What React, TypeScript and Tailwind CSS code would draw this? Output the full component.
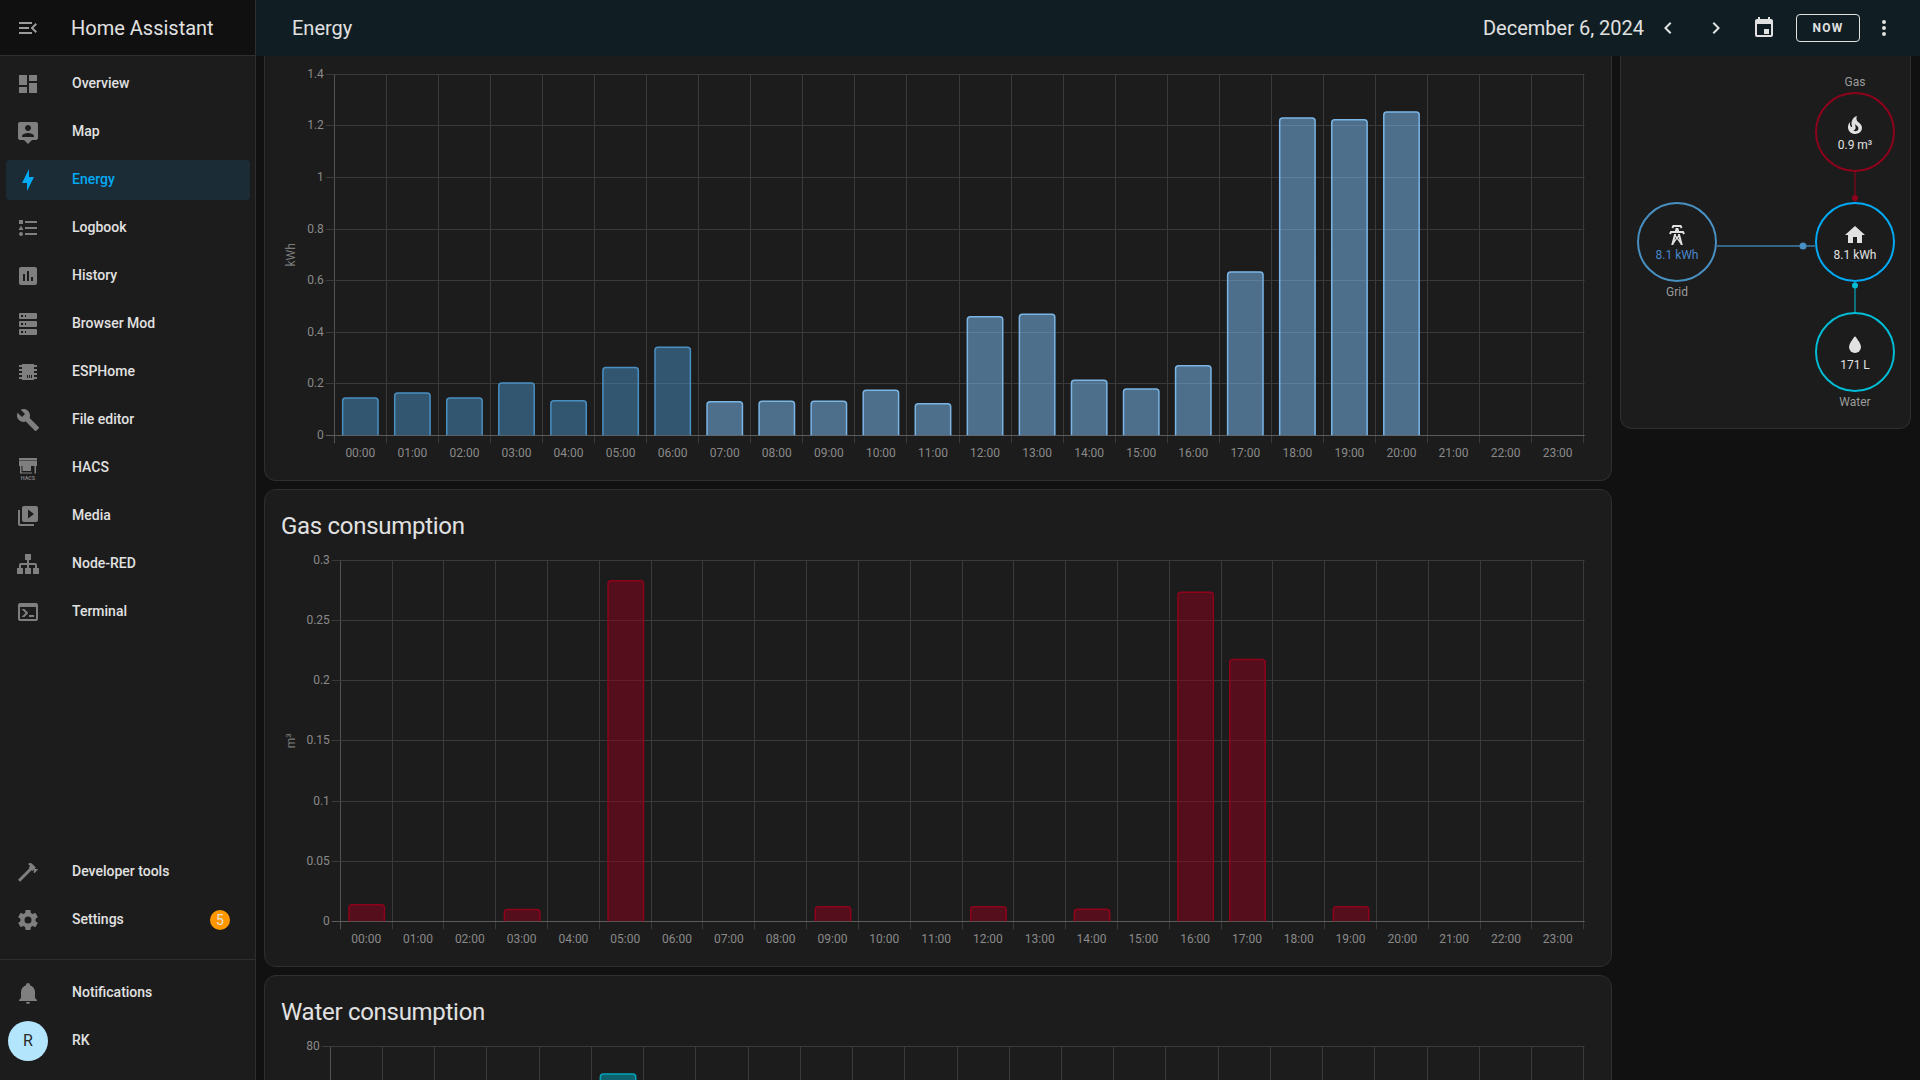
import React from "react";

const paths: Record<string, string> = {
  menu: "M21,15.61L19.59,17L14.58,12L19.59,7L21,8.39L17.44,12L21,15.61M3,6H16V8H3V6M3,13V11H13V13H3M3,18V16H16V18H3Z",
  dashboard: "M13,3V9H21V3M13,21H21V11H13M3,21H11V15H3M3,13H11V3H3V13Z",
  map: "M20 2H4C2.9 2 2 2.9 2 4V18C2 19.11 2.9 20 4 20H8L12 24L16 20H20C21.11 20 22 19.11 22 18V4C22 2.9 21.11 2 20 2M12 5C13.66 5 15 6.34 15 8C15 9.66 13.66 11 12 11C10.34 11 9 9.66 9 8C9 6.34 10.34 5 12 5M18 17H6V16C6 14 10 12.9 12 12.9C14 12.9 18 14 18 16V17Z",
  bolt: "M11 15H6L13 1V9H18L11 23V15Z",
  list: "M5,9.5L7.5,14H2.5L5,9.5M3,4H7V8H3V4M5,20A2,2 0 0,0 7,18A2,2 0 0,0 5,16A2,2 0 0,0 3,18A2,2 0 0,0 5,20M9,5V7H21V5H9M9,19H21V17H9V19M9,13H21V11H9V13Z",
  chart: "M19 3H5C3.9 3 3 3.9 3 5V19C3 20.1 3.9 21 5 21H19C20.1 21 21 20.1 21 19V5C21 3.9 20.1 3 19 3M9 17H7V10H9V17M13 17H11V7H13V17M17 17H15V13H17V17Z",
  server: "M4,1H20A1,1 0 0,1 21,2V6A1,1 0 0,1 20,7H4A1,1 0 0,1 3,6V2A1,1 0 0,1 4,1M4,9H20A1,1 0 0,1 21,10V14A1,1 0 0,1 20,15H4A1,1 0 0,1 3,14V10A1,1 0 0,1 4,9M4,17H20A1,1 0 0,1 21,18V22A1,1 0 0,1 20,23H4A1,1 0 0,1 3,22V18A1,1 0 0,1 4,17M9,5H10V3H9V5M9,13H10V11H9V13M9,21H10V19H9V21M5,3V5H7V3H5M5,11V13H7V11H5M5,19V21H7V19H5Z",
  chip: "M6,4H18V5H21V7H18V9H21V11H18V13H21V15H18V17H21V19H18V20H6V19H3V17H6V15H3V13H6V11H3V9H6V7H3V5H6V4M11,15V18H12V15H11M13,15V18H14V15H13M15,15V18H16V15H15Z",
  wrench: "M22.7,19L13.6,9.9C14.5,7.6 14,4.9 12.1,3C10.1,1 7.1,0.6 4.7,1.7L9,6L6,9L1.6,4.7C0.4,7.1 0.9,10.1 2.9,12.1C4.8,14 7.5,14.5 9.8,13.6L18.9,22.7C19.3,23.1 19.9,23.1 20.3,22.7L22.6,20.4C23.1,20 23.1,19.3 22.7,19Z",
  media: "M4 6H2V20C2 21.1 2.9 22 4 22H18V20H4V6M20 2H8C6.9 2 6 2.9 6 4V16C6 17.1 6.9 18 8 18H20C21.1 18 22 17.1 22 16V4C22 2.9 21.1 2 20 2M12 14.5V5.5L18 10L12 14.5Z",
  sitemap: "M9,2V8H11V11H5C3.89,11 3,11.89 3,13V16H1V22H7V16H5V13H11V16H9V22H15V16H13V13H19V16H17V22H23V16H21V13C21,11.89 20.11,11 19,11H13V8H15V2H9Z",
  console: "M20,19V7H4V19H20M20,3A2,2 0 0,1 22,5V19A2,2 0 0,1 20,21H4A2,2 0 0,1 2,19V5C2,3.89 2.9,3 4,3H20M13,17V15H18V17H13M9.58,13L5.57,9H8.4L11.7,12.3C12.09,12.69 12.09,13.33 11.7,13.72L8.42,17H5.59L9.58,13Z",
  hammer: "M2 19.63L13.43 8.2L12.72 7.5L14.14 6.07L12 3.89C13.2 2.7 15.09 2.7 16.27 3.89L19.87 7.5L18.45 8.91H21.29L22 9.62L18.45 13.21L17.74 12.5V9.62L16.27 11.04L15.56 10.33L4.13 21.76L2 19.63Z",
  cog: "M12,15.5A3.5,3.5 0 0,1 8.5,12A3.5,3.5 0 0,1 12,8.5A3.5,3.5 0 0,1 15.5,12A3.5,3.5 0 0,1 12,15.5M19.43,12.97C19.47,12.65 19.5,12.33 19.5,12C19.5,11.67 19.47,11.34 19.43,11L21.54,9.37C21.73,9.22 21.78,8.95 21.66,8.73L19.66,5.27C19.54,5.05 19.27,4.96 19.05,5.05L16.56,6.05C16.04,5.66 15.5,5.32 14.87,5.07L14.5,2.42C14.46,2.18 14.25,2 14,2H10C9.75,2 9.54,2.18 9.5,2.42L9.13,5.07C8.5,5.32 7.96,5.66 7.44,6.05L4.95,5.05C4.73,4.96 4.46,5.05 4.34,5.27L2.34,8.73C2.21,8.95 2.27,9.22 2.46,9.37L4.57,11C4.53,11.34 4.5,11.67 4.5,12C4.5,12.33 4.53,12.65 4.57,12.97L2.46,14.63C2.27,14.78 2.21,15.05 2.34,15.27L4.34,18.73C4.46,18.95 4.73,19.03 4.95,18.95L7.44,17.94C7.96,18.34 8.5,18.68 9.13,18.93L9.5,21.58C9.54,21.82 9.75,22 10,22H14C14.25,22 14.46,21.82 14.5,21.58L14.87,18.93C15.5,18.67 16.04,18.34 16.56,17.94L19.05,18.95C19.27,19.03 19.54,18.95 19.66,18.73L21.66,15.27C21.78,15.05 21.73,14.78 21.54,14.63L19.43,12.97Z",
  bell: "M21,19V20H3V19L5,17V11C5,7.9 7.03,5.17 10,4.29C10,4.19 10,4.1 10,4A2,2 0 0,1 12,2A2,2 0 0,1 14,4C14,4.1 14,4.19 14,4.29C16.97,5.17 19,7.9 19,11V17L21,19M14,21A2,2 0 0,1 12,23A2,2 0 0,1 10,21",
  left: "M15.41,16.58L10.83,12L15.41,7.41L14,6L8,12L14,18L15.41,16.58Z",
  right: "M8.59,16.58L13.17,12L8.59,7.41L10,6L16,12L10,18L8.59,16.58Z",
  calendar: "M19 3H18V1H16V3H8V1H6V3H5C3.89 3 3 3.9 3 5V19A2 2 0 0 0 5 21H19A2 2 0 0 0 21 19V5A2 2 0 0 0 19 3M19 19H5V8H19V19M12 13H17V18H12V13Z",
  dots: "M12,16A2,2 0 0,1 14,18A2,2 0 0,1 12,20A2,2 0 0,1 10,18A2,2 0 0,1 12,16M12,10A2,2 0 0,1 14,12A2,2 0 0,1 12,14A2,2 0 0,1 10,12A2,2 0 0,1 12,10M12,4A2,2 0 0,1 14,6A2,2 0 0,1 12,8A2,2 0 0,1 10,6A2,2 0 0,1 12,4Z",
  home: "M10,20V14H14V20H19V12H22L12,3L2,12H5V20H10Z",
  water: "M12,20A6,6 0 0,1 6,14C6,10 12,3.25 12,3.25C12,3.25 18,10 18,14A6,6 0 0,1 12,20Z",
  fire: "M17.66 11.2C17.43 10.9 17.15 10.64 16.89 10.38C16.22 9.78 15.46 9.35 14.82 8.72C13.33 7.26 13 4.85 13.95 3C13 3.23 12.17 3.75 11.46 4.32C8.87 6.4 7.85 10.07 9.07 13.22C9.11 13.32 9.15 13.42 9.15 13.55C9.15 13.77 9 13.97 8.8 14.05C8.57 14.15 8.33 14.09 8.14 13.93C8.08 13.88 8.04 13.83 8 13.76C6.87 12.33 6.69 10.28 7.45 8.64C5.78 10 4.87 12.3 5 14.47C5.06 14.97 5.12 15.47 5.29 15.97C5.43 16.57 5.7 17.17 6 17.7C7.08 19.43 8.95 20.67 10.96 20.92C13.1 21.19 15.39 20.8 17.03 19.32C18.86 17.66 19.5 15 18.56 12.72L18.43 12.46C18.22 12 17.66 11.2 17.66 11.2M14.5 17.5C14.22 17.74 13.76 18 13.4 18.1C12.28 18.5 11.16 17.94 10.5 17.28C11.69 17 12.4 16.12 12.61 15.23C12.78 14.43 12.46 13.77 12.33 13C12.21 12.26 12.23 11.63 12.5 10.94C12.69 11.32 12.89 11.7 13.13 12C13.9 13 15.11 13.44 15.37 14.8C15.41 14.94 15.43 15.08 15.43 15.23C15.46 16.05 15.1 16.95 14.5 17.5H14.5Z",
  tower: "M8.28,5.45L6.5,4.55L7.76,2H16.23L17.5,4.55L15.72,5.44L15,4H9L8.28,5.45M18.62,8H14.09L13.3,5H10.7L9.91,8H5.38L4.1,10.55L5.89,11.44L6.62,10H17.38L18.1,11.45L19.89,10.56L18.62,8M17.77,22H15.7L15.46,21.1L12,15.9L8.53,21.1L8.3,22H6.23L9.12,11H11.19L10.83,12.35L12,14.1L13.16,12.35L12.81,11H14.88L17.77,22M11.2,15L10.47,13.9L9.56,17.36L11.2,15M14.44,17.36L13.53,13.9L12.8,15L14.44,17.36Z",
};

function Icon({ name, className = "" }: { name: string; className?: string }) {
  return (
    <svg viewBox="0 0 24 24" className={"w-6 h-6 shrink-0 fill-current " + className}>
      <path d={paths[name]} fillRule={name === "calendar" ? "evenodd" : "nonzero"} />
    </svg>
  );
}

function HacsIcon() {
  return (
    <svg viewBox="0 0 24 24" className="w-6 h-6 shrink-0 text-[#7f7f7f]">
      <path d="M3 2H21V4H3V2ZM3 4.5H21V10H3V4.5ZM4 10H5.5V17.5H4V10ZM18.5 10H20V17.5H18.5V10ZM6.5 10H15V15H6.5V10ZM4 16.5H16V17.5H4V16.5Z" fill="currentColor" />
      <text x="12" y="24" textAnchor="middle" fontSize="5.4" fontWeight="700" fill="currentColor">HACS</text>
    </svg>
  );
}

type NavItem = { label: string; icon: string; active?: boolean; badge?: string };

const topItems: NavItem[] = [
  { label: "Overview", icon: "dashboard" },
  { label: "Map", icon: "map" },
  { label: "Energy", icon: "bolt", active: true },
  { label: "Logbook", icon: "list" },
  { label: "History", icon: "chart" },
  { label: "Browser Mod", icon: "server" },
  { label: "ESPHome", icon: "chip" },
  { label: "File editor", icon: "wrench" },
  { label: "HACS", icon: "hacs" },
  { label: "Media", icon: "media" },
  { label: "Node-RED", icon: "sitemap" },
  { label: "Terminal", icon: "console" },
];

function NavRow({ item }: { item: NavItem }) {
  return (
    <div className="h-12 flex items-center">
      <div
        className={
          "h-10 w-[244px] ml-[6px] pl-[10px] flex items-center rounded-[4px] " +
          (item.active ? "bg-[#1b2c36]" : "")
        }
      >
        {item.icon === "hacs" ? (
          <HacsIcon />
        ) : (
          <Icon name={item.icon} className={item.active ? "text-[#03a9f4]" : "text-[#7f7f7f]"} />
        )}
        <span className={"ml-8 mb-0.5 text-sm font-medium " + (item.active ? "text-[#03a9f4]" : "text-[#e1e1e1]")}>
          {item.label}
        </span>
        {item.badge && (
          <span className="ml-auto mr-5 w-5 h-5 rounded-full bg-[#ff9800] text-[#e1e1e1] text-sm flex items-center justify-center">
            {item.badge}
          </span>
        )}
      </div>
    </div>
  );
}

function Sidebar() {
  return (
    <aside className="w-[256px] shrink-0 h-full bg-[#1c1c1c] border-r border-[#2f2f2f] flex flex-col">
      <div className="h-14 shrink-0 bg-[#101010] border-b border-[#2f2f2f] flex items-center pl-4">
        <Icon name="menu" className="text-[#9b9b9b]" />
        <span className="ml-[31px] text-xl text-[#e1e1e1]">Home Assistant</span>
      </div>
      <div className="pt-1">
        {topItems.map((item) => (
          <NavRow key={item.label} item={item} />
        ))}
      </div>
      <div className="mt-auto">
        <NavRow item={{ label: "Developer tools", icon: "hammer" }} />
        <NavRow item={{ label: "Settings", icon: "cog", badge: "5" }} />
      </div>
      <div className="mt-[15px] border-t border-[#2f2f2f] pt-[9px] pb-[15px]">
        <NavRow item={{ label: "Notifications", icon: "bell" }} />
        <div className="h-12 flex items-center">
          <div className="ml-2 w-10 h-10 rounded-full bg-[#b3e5fc] text-[#2a2a2a] flex items-center justify-center text-base">
            R
          </div>
          <span className="ml-6 mb-0.5 text-sm font-medium text-[#e1e1e1]">RK</span>
        </div>
      </div>
    </aside>
  );
}

function TopBar() {
  return (
    <header className="h-14 shrink-0 bg-[#101e24] flex items-center pl-[36px] text-[#e1e1e1]">
      <span className="text-xl">Energy</span>
      <span className="ml-auto text-xl">December 6, 2024</span>
      <Icon name="left" className="ml-3" />
      <Icon name="right" className="ml-6" />
      <Icon name="calendar" className="ml-[24px]" />
      <button className="ml-5 w-16 h-7 border border-[#e1e1e1] rounded-[4px] text-xs font-bold tracking-[1.25px]">
        NOW
      </button>
      <Icon name="dots" className="ml-3 mr-6" />
    </header>
  );
}

type ChartBar = { hour: number; top: number; fill: string; stroke: string };

type ChartProps = {
  svgTop: number;
  height: number;
  left: number;
  top: number;
  bottom: number;
  ticks: { label: string; y: number }[];
  unit?: string;
  bars: ChartBar[];
  barShift?: number;
  hourLabels?: boolean;
};

const RIGHT = 1583.7;
const ORIGIN_X = 265;
const snap = (v: number) => Math.floor(v) + 0.5;
const hours = Array.from({ length: 24 }, (_, i) => String(i).padStart(2, "0") + ":00");

// all numbers are page coordinates, the svg just shifts them
function Chart({ svgTop, height, left, top, bottom, ticks, unit, bars, barShift = 0, hourLabels = true }: ChartProps) {
  const pitch = (RIGHT - left) / 24;
  const x = (v: number) => v - ORIGIN_X;
  const y = (v: number) => v - svgTop;
  return (
    <svg width={1346} height={height} className="block">
      {hours.map((_, i) => (
        <line
          key={i}
          x1={snap(x(left + pitch * (i + 1)))}
          x2={snap(x(left + pitch * (i + 1)))}
          y1={y(top)}
          y2={y(bottom) + 8}
          stroke="#3a3a3a"
        />
      ))}
      <line x1={snap(x(left))} x2={snap(x(left))} y1={y(top)} y2={y(bottom) + 8} stroke="#525252" />
      {ticks.map((t) => (
        <g key={t.label}>
          <line
            x1={x(left) - 8.5}
            x2={x(RIGHT) + 1}
            y1={snap(y(t.y))}
            y2={snap(y(t.y))}
            stroke={t.label === "0" ? "#5c5c5c" : "#3a3a3a"}
          />
          <text
            x={x(left) - 10.5}
            y={y(t.y) - 0.5}
            textAnchor="end"
            dominantBaseline="central"
            className="fill-[#8a8a8a] text-[12px]"
          >
            {t.label}
          </text>
        </g>
      ))}
      {unit && (
        <text
          transform={`translate(${290.5 - ORIGIN_X} ${y((top + bottom) / 2)}) rotate(-90)`}
          textAnchor="middle"
          dominantBaseline="central"
          className="fill-[#7a7a7a] text-[12px]"
        >
          {unit}
        </text>
      )}
      {bars.map((b) => {
        const cx = x(left + pitch * (b.hour + 0.5)) + barShift;
        const l = cx - 17.7;
        const r = cx + 17.7;
        const t = y(b.top) + 0.75;
        const base = y(bottom);
        return (
          <g key={b.hour}>
            <path
              d={`M${l} ${base}V${t + 3}Q${l} ${t} ${l + 3} ${t}H${r - 3}Q${r} ${t} ${r} ${t + 3}V${base}Z`}
              fill={b.fill}
            />
            <path
              d={`M${l} ${base}V${t + 3}Q${l} ${t} ${l + 3} ${t}H${r - 3}Q${r} ${t} ${r} ${t + 3}V${base}`}
              fill="none"
              stroke={b.stroke}
              strokeWidth={1.5}
            />
          </g>
        );
      })}
      {hourLabels &&
        hours.map((h, i) => (
          <text
            key={h}
            x={x(left + pitch * (i + 0.5))}
            y={y(bottom) + 17.5}
            textAnchor="middle"
            dominantBaseline="central"
            className="fill-[#8a8a8a] text-[12px]"
          >
            {h}
          </text>
        ))}
    </svg>
  );
}

const energyTops = [397.3, 392.3, 397.3, 382.3, 400, 366.7, 346.5, 401, 400.5, 400.5, 389.4, 403, 316, 313.5, 379.6, 388.3, 365, 271.3, 117.3, 119, 111.3];
const energyBars = energyTops.map((top, hour) =>
  hour < 7
    ? { hour, top, fill: "rgba(72,143,194,0.5)", stroke: "#488fc2" }
    : { hour, top, fill: "rgba(126,194,250,0.5)", stroke: "#7ab5e6" }
);

const gasBars = [
  { hour: 0, top: 904 },
  { hour: 3, top: 908.7 },
  { hour: 5, top: 580 },
  { hour: 9, top: 906 },
  { hour: 12, top: 906 },
  { hour: 14, top: 908.6 },
  { hour: 16, top: 591.5 },
  { hour: 17, top: 658.8 },
  { hour: 19, top: 906 },
].map((b) => ({ ...b, fill: "rgba(142,2,27,0.5)", stroke: "#8e021b" }));

const waterBars = [{ hour: 5, top: 1073.3, fill: "rgba(0,168,192,0.5)", stroke: "#00a5bc" }];

function Card({ className = "", children }: { className?: string; children: React.ReactNode }) {
  return <div className={"bg-[#1c1c1c] border border-[#2f2f2f] rounded-xl overflow-hidden " + className}>{children}</div>;
}

function CardTitle({ children }: { children: React.ReactNode }) {
  return <h2 className="pt-5 pl-4 h-[52px] text-2xl leading-8 tracking-[-0.012em] text-[#e1e1e1]">{children}</h2>;
}

function FlowNode({ color, icon, value, valueClass = "text-[#e1e1e1]" }: { color: string; icon: string; value: string; valueClass?: string }) {
  return (
    <div className={"w-20 h-20 rounded-full border-2 flex flex-col items-center justify-center pt-[2px] " + color}>
      <Icon name={icon} className="text-[#e1e1e1]" />
      <span className={"text-xs leading-4 " + valueClass}>{value}</span>
    </div>
  );
}

function EnergyFlow() {
  return (
    <Card className="relative h-[373px] border-t-0 rounded-t-none">
      <div className="flex justify-between pl-4 pr-[15px] pt-[18px]">
        <div className="pt-[128px] flex flex-col items-center text-xs text-[#9b9b9b]">
          <FlowNode color="border-[#488fc2]" icon="tower" value="8.1 kWh" valueClass="text-[#4a86c8]" />
          <span className="mt-[2px] leading-4">Grid</span>
        </div>
        <div className="flex flex-col items-center text-xs text-[#9b9b9b]">
          <span className="mb-[2px] leading-4">Gas</span>
          <FlowNode color="border-[#8e021b]" icon="fire" value="0.9 m³" />
          <div className="h-[30px]" />
          <FlowNode color="border-[#03a9f4]" icon="home" value="8.1 kWh" />
          <div className="h-[30px]" />
          <FlowNode color="border-[#00bcd4]" icon="water" value="171 L" />
          <span className="mt-[2px] leading-4">Water</span>
        </div>
      </div>
      <svg className="absolute inset-0 w-full h-full pointer-events-none">
        <line x1={96} x2={194} y1={190} y2={190} stroke="#3f7ca8" strokeWidth={1.5} />
        <circle cx={182} cy={190} r={3.5} fill="#488fc2" />
        <line x1={234} x2={234} y1={116} y2={146} stroke="#6f0a1c" strokeWidth={1.5} />
        <circle cx={234} cy={142} r={3} fill="#8e021b" />
        <line x1={234} x2={234} y1={226} y2={256} stroke="#0e8a9b" strokeWidth={1.5} />
        <circle cx={234} cy={229.5} r={3} fill="#00bcd4" />
      </svg>
    </Card>
  );
}

export default function App() {
  return (
    <div className="flex w-full h-[1080px] overflow-hidden bg-[#111111] font-['Roboto',sans-serif]">
      <Sidebar />
      <main className="flex-1 min-w-0 flex flex-col">
        <TopBar />
        <div className="flex-1 min-h-0 overflow-hidden flex gap-2 pl-2">
          <div className="w-[1348px] shrink-0 flex flex-col gap-2">
            <Card className="h-[425px] shrink-0 border-t-0 rounded-t-none">
              <Chart
                svgTop={56}
                height={424}
                left={334.3}
                top={74.3}
                bottom={435.3}
                unit="kWh"
                ticks={[
                  { label: "1.4", y: 74.3 },
                  { label: "1.2", y: 125.3 },
                  { label: "1", y: 177.3 },
                  { label: "0.8", y: 229.3 },
                  { label: "0.6", y: 280.3 },
                  { label: "0.4", y: 332.3 },
                  { label: "0.2", y: 383.3 },
                  { label: "0", y: 435.3 },
                ]}
                bars={energyBars}
              />
            </Card>
            <Card className="h-[478px] shrink-0">
              <CardTitle>Gas consumption</CardTitle>
              <Chart
                svgTop={542}
                height={424}
                left={340.3}
                top={560.3}
                bottom={921.3}
                unit="m³"
                barShift={0.5}
                ticks={[
                  { label: "0.3", y: 560.3 },
                  { label: "0.25", y: 620.3 },
                  { label: "0.2", y: 680.3 },
                  { label: "0.15", y: 740.3 },
                  { label: "0.1", y: 801.3 },
                  { label: "0.05", y: 861.3 },
                  { label: "0", y: 921.3 },
                ]}
                bars={gasBars}
              />
            </Card>
            <Card className="h-[478px] shrink-0">
              <CardTitle>Water consumption</CardTitle>
              <Chart
                svgTop={1028}
                height={424}
                left={330.3}
                top={1046.3}
                bottom={1407.3}
                barShift={0.5}
                hourLabels={false}
                ticks={[{ label: "80", y: 1046.3 }]}
                bars={waterBars}
              />
            </Card>
          </div>
          <div className="w-[291px] shrink-0">
            <EnergyFlow />
          </div>
        </div>
      </main>
    </div>
  );
}
